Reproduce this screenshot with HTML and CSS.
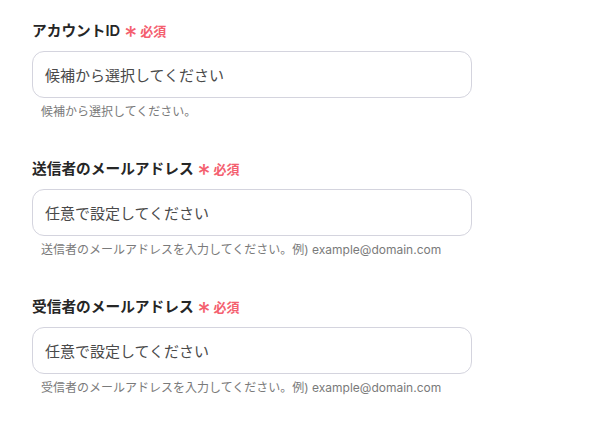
FILE: index.html
```html
<!DOCTYPE html>
<html lang="ja">
<head>
<meta charset="utf-8">
<link rel="stylesheet" href="styles.css">
</head>
<body>
<div class="form">
  <div class="field">
    <div class="label">アカウントID<span class="req"><span class="ast">*</span>必須</span></div>
    <div class="input">候補から選択してください</div>
    <div class="help">候補から選択してください。</div>
  </div>
  <div class="field">
    <div class="label">送信者のメールアドレス<span class="req"><span class="ast">*</span>必須</span></div>
    <div class="input">任意で設定してください</div>
    <div class="help">送信者のメールアドレスを入力してください。例) example@domain.com</div>
  </div>
  <div class="field">
    <div class="label">受信者のメールアドレス<span class="req"><span class="ast">*</span>必須</span></div>
    <div class="input">任意で設定してください</div>
    <div class="help">受信者のメールアドレスを入力してください。例) example@domain.com</div>
  </div>
</div>
</body>
</html>
```
FILE: styles.css
```css
html, body { margin: 0; padding: 0; background: #fff; }
body {
  font-family: Inter, "Noto Sans CJK JP", sans-serif;
  color: #222;
}
.form {
  padding: 20px 0 0 32px;
  width: 440px;
  display: flex;
  flex-direction: column;
  gap: 38px;
}
.field { display: flex; flex-direction: column; }
.label {
  font-size: 14.7px;
  font-weight: 600;
  line-height: 22px;
  color: #262626;
  display: flex;
  align-items: center;
}
.req {
  color: #f4606f;
  font-size: 13px;
  font-weight: 700;
  margin-left: 4px;
  display: inline-flex;
  align-items: center;
}
.ast { font-size: 26px; line-height: 12px; margin-right: 3px; position: relative; top: 5px; font-weight: 400; }
.input {
  margin-top: 9px;
  box-sizing: border-box;
  height: 47px;
  border: 1px solid #d4d4de;
  border-radius: 12px;
  padding: 0 12px;
  display: flex;
  align-items: center;
  font-size: 15px;
  color: #4a4a4a;
}
.help {
  margin-top: 6px;
  padding-left: 9px;
  font-size: 12px;
  line-height: 16px;
  color: #7a7a7a;
}
```
